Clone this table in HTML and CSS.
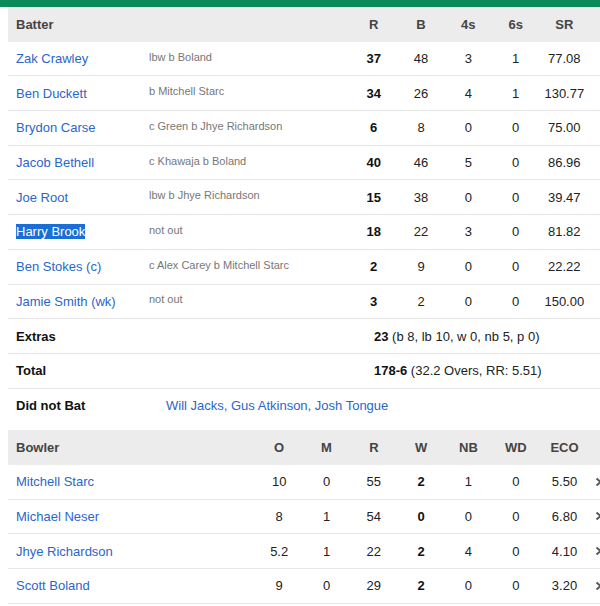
FILE: index.html
```html
<!DOCTYPE html>
<html>
<head>
<meta charset="utf-8">
<link rel="stylesheet" href="styles.css">
</head>
<body>
<div class="topbar"></div>
<div class="wrap">
  <div class="bat row head">
    <div class="name">Batter</div><div></div>
    <div class="num">R</div><div class="num">B</div><div class="num">4s</div><div class="num">6s</div><div class="num">SR</div><div></div>
  </div>
  <div class="bat row"><div class="name"><a>Zak Crawley</a></div><div class="how">lbw b Boland</div><div class="num b">37</div><div class="num">48</div><div class="num">3</div><div class="num">1</div><div class="num">77.08</div><div></div></div>
  <div class="bat row"><div class="name"><a>Ben Duckett</a></div><div class="how">b Mitchell Starc</div><div class="num b">34</div><div class="num">26</div><div class="num">4</div><div class="num">1</div><div class="num">130.77</div><div></div></div>
  <div class="bat row"><div class="name"><a>Brydon Carse</a></div><div class="how">c Green b Jhye Richardson</div><div class="num b">6</div><div class="num">8</div><div class="num">0</div><div class="num">0</div><div class="num">75.00</div><div></div></div>
  <div class="bat row"><div class="name"><a>Jacob Bethell</a></div><div class="how">c Khawaja b Boland</div><div class="num b">40</div><div class="num">46</div><div class="num">5</div><div class="num">0</div><div class="num">86.96</div><div></div></div>
  <div class="bat row"><div class="name"><a>Joe Root</a></div><div class="how">lbw b Jhye Richardson</div><div class="num b">15</div><div class="num">38</div><div class="num">0</div><div class="num">0</div><div class="num">39.47</div><div></div></div>
  <div class="bat row"><div class="name"><a class="sel">Harry Brook</a></div><div class="how">not out</div><div class="num b">18</div><div class="num">22</div><div class="num">3</div><div class="num">0</div><div class="num">81.82</div><div></div></div>
  <div class="bat row"><div class="name"><a>Ben Stokes (c)</a></div><div class="how">c Alex Carey b Mitchell Starc</div><div class="num b">2</div><div class="num">9</div><div class="num">0</div><div class="num">0</div><div class="num">22.22</div><div></div></div>
  <div class="bat row"><div class="name"><a>Jamie Smith (wk)</a></div><div class="how">not out</div><div class="num b">3</div><div class="num">2</div><div class="num">0</div><div class="num">0</div><div class="num">150.00</div><div></div></div>
  <div class="sum row"><div class="name lbl">Extras</div><div class="val"><b>23</b> (b 8, lb 10, w 0, nb 5, p 0)</div></div>
  <div class="sum row"><div class="name lbl">Total</div><div class="val"><b>178-6</b> (32.2 Overs, RR: 5.51)</div></div>
  <div class="dnb row last"><div class="name lbl">Did not Bat</div><div class="dnbval">Will Jacks, Gus Atkinson, Josh Tongue</div></div>

  <div class="bowl row head">
    <div class="name">Bowler</div>
    <div class="num">O</div><div class="num">M</div><div class="num">R</div><div class="num">W</div><div class="num">NB</div><div class="num">WD</div><div class="num">ECO</div><div></div>
  </div>
  <div class="bowl row"><div class="name"><a>Mitchell Starc</a></div><div class="num">10</div><div class="num">0</div><div class="num">55</div><div class="num b">2</div><div class="num">1</div><div class="num">0</div><div class="num">5.50</div><div class="chev"><svg width="8" height="10" viewBox="0 0 8 10"><path d="M1.5 1.5 L5.5 5 L1.5 8.5" fill="none" stroke="#555" stroke-width="1.8"/></svg></div></div>
  <div class="bowl row"><div class="name"><a>Michael Neser</a></div><div class="num">8</div><div class="num">1</div><div class="num">54</div><div class="num b">0</div><div class="num">0</div><div class="num">0</div><div class="num">6.80</div><div class="chev"><svg width="8" height="10" viewBox="0 0 8 10"><path d="M1.5 1.5 L5.5 5 L1.5 8.5" fill="none" stroke="#555" stroke-width="1.8"/></svg></div></div>
  <div class="bowl row"><div class="name"><a>Jhye Richardson</a></div><div class="num">5.2</div><div class="num">1</div><div class="num">22</div><div class="num b">2</div><div class="num">4</div><div class="num">0</div><div class="num">4.10</div><div class="chev"><svg width="8" height="10" viewBox="0 0 8 10"><path d="M1.5 1.5 L5.5 5 L1.5 8.5" fill="none" stroke="#555" stroke-width="1.8"/></svg></div></div>
  <div class="bowl row"><div class="name"><a>Scott Boland</a></div><div class="num">9</div><div class="num">0</div><div class="num">29</div><div class="num b">2</div><div class="num">0</div><div class="num">0</div><div class="num">3.20</div><div class="chev"><svg width="8" height="10" viewBox="0 0 8 10"><path d="M1.5 1.5 L5.5 5 L1.5 8.5" fill="none" stroke="#555" stroke-width="1.8"/></svg></div></div>
</div>
</body>
</html>
```
FILE: styles.css
```css
html, body {
  margin: 0;
  padding: 0;
  background: #fff;
  overflow: hidden;
}
body {
  font-family: "Liberation Sans", Arial, sans-serif;
  font-size: 13px;
  color: #222;
}
.topbar {
  height: 7px;
  background: #0c8a5c;
}
.wrap {
  padding-left: 8px;
  width: 592px;
}
.row {
  display: grid;
  align-items: center;
  height: 34.7px;
  box-sizing: border-box;
  border-bottom: 1px solid #e6e6e6;
  overflow: hidden;
}
.row.last {
  border-bottom: none;
}
.bat {
  grid-template-columns: 141px 201px 47.33px 47.33px 47.33px 47.33px 50px 1fr;
}
.bowl {
  grid-template-columns: 247.5px 47.33px 47.33px 47.33px 47.33px 47.33px 47.33px 50px 1fr;
}
.head {
  background: #ececec;
  border-bottom: none;
  font-weight: bold;
  color: #444;
}
.bowl.head {
  margin-top: 7px;
}
.name {
  padding-left: 8px;
}
.name a {
  color: #2a66cc;
}
.name a.sel {
  background: #1a6fd6;
  color: #fff;
}
.how {
  font-size: 11px;
  color: #777;
  padding-bottom: 4px;
}
.num {
  text-align: center;
}
.b {
  font-weight: bold;
  color: #111;
}
.lbl {
  font-weight: bold;
  color: #111;
}
.sum {
  grid-template-columns: 342px 1fr;
}
.val {
  padding-left: 24px;
  color: #222;
}
.val b {
  color: #111;
}
.dnb {
  grid-template-columns: 158px 1fr;
}
.dnbval {
  color: #2a66cc;
}
.chev {
  padding-left: 6px;
  display: flex;
  align-items: center;
}
```
